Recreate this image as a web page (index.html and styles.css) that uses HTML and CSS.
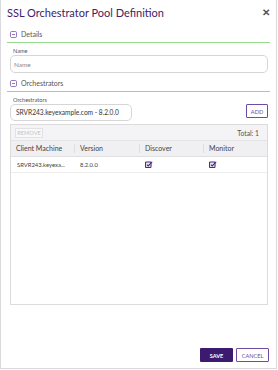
FILE: index.html
```html
<!DOCTYPE html>
<html lang="en">
<head>
    <meta charset="UTF-8">
    <title>SSL Orchestrator Pool Definition</title>
    <link rel="stylesheet" href="styles.css">
</head>
<body>

<div class="dialog">
    <div class="dialog-title">
        <h1>SSL Orchestrator Pool Definition</h1>
        <span class="close">&#x2715;</span>
    </div>

    <!-- Details -->
    <div class="section">
        <div class="section-head">
            <svg class="toggle" viewBox="0 0 7 7"><rect x="0.5" y="0.5" width="6" height="6" rx="1.2"/><line x1="2" y1="3.5" x2="5" y2="3.5"/></svg>
            <span>Details</span>
        </div>
        <div class="field">
            <label>Name</label>
            <input class="text-input" type="text" placeholder="Name">
        </div>
    </div>

    <!-- Orchestrators -->
    <div class="section">
        <div class="section-head">
            <svg class="toggle" viewBox="0 0 7 7"><rect x="0.5" y="0.5" width="6" height="6" rx="1.2"/><line x1="2" y1="3.5" x2="5" y2="3.5"/></svg>
            <span>Orchestrators</span>
        </div>
        <div class="field">
            <label>Orchestrators</label>
            <div class="select-row">
                <div class="select">SRVR243.keyexample.com - 8.2.0.0</div>
                <button class="btn-outline add">ADD</button>
            </div>
        </div>

        <div class="grid">
            <div class="grid-toolbar">
                <button class="btn-disabled">REMOVE</button>
                <span class="total">Total: 1</span>
            </div>
            <div class="grid-row grid-head">
                <div class="cell">Client Machine</div>
                <div class="cell">Version</div>
                <div class="cell">Discover</div>
                <div class="cell">Monitor</div>
            </div>
            <div class="grid-row grid-data">
                <div class="cell">SRVR243.keyexa...</div>
                <div class="cell">8.2.0.0</div>
                <div class="cell"><svg class="check" viewBox="0 0 8 7"><rect x="0.5" y="1" width="5.5" height="5.5" rx="0.8"/><path d="M2 3.6 L3.2 4.9 L7.2 0.9"/></svg></div>
                <div class="cell"><svg class="check" viewBox="0 0 8 7"><rect x="0.5" y="1" width="5.5" height="5.5" rx="0.8"/><path d="M2 3.6 L3.2 4.9 L7.2 0.9"/></svg></div>
            </div>
        </div>
    </div>

    <div class="dialog-actions">
        <button class="btn-primary">SAVE</button>
        <button class="btn-outline">CANCEL</button>
    </div>
</div>

</body>
</html>
```

FILE: styles.css
```css
body {
    margin: 0;
    padding: 0;
    font-family: 'Lato', 'Liberation Sans', sans-serif;
    background-color: #fff;
    color: #444;
}
.dialog {
    width: 277px;
    height: 369px;
    box-sizing: border-box;
    border: 1px solid #d9d9de;
    border-top: none;
    display: flex;
    flex-direction: column;
}
.dialog-title {
    display: flex;
    justify-content: space-between;
    align-items: center;
    height: 24px;
    padding: 0 6px 0 6px;
}
.dialog-title h1 {
    margin: 0;
    font-size: 11px;
    font-weight: 400;
    color: #3f2168;
}
.close {
    font-size: 10px;
    font-weight: bold;
    color: #555;
}
.section {
    margin: 0 6px;
}
.section-head {
    display: flex;
    align-items: center;
    gap: 4px;
    height: 16px;
    margin-top: 2px;
    padding-left: 3px;
    border-bottom: 1px solid #95d98a;
    font-size: 7px;
    line-height: 9px;
    color: #555;
}
.toggle {
    width: 7px;
    height: 7px;
    fill: none;
    stroke: #7b55b0;
    stroke-width: 0.8;
}
.field {
    padding: 4px 2px 0 3px;
}
.field label {
    display: block;
    font-size: 5.6px;
    line-height: 7px;
    color: #555;
    margin-bottom: 1px;
    padding-left: 3px;
}
.text-input {
    display: block;
    width: 100%;
    height: 18px;
    margin: 0;
    box-sizing: border-box;
    border: 1px solid #d6d6d6;
    border-radius: 5px;
    padding: 0 3px;
    font-family: inherit;
    font-size: 6.4px;
    color: #444;
}
.text-input::placeholder {
    color: #888;
}
.select-row {
    display: flex;
    justify-content: space-between;
    align-items: flex-start;
}
.select {
    width: 122px;
    height: 17px;
    box-sizing: border-box;
    border: 1px solid #d6d6d6;
    border-radius: 5px;
    padding-left: 5px;
    font-size: 6.6px;
    line-height: 15px;
    white-space: nowrap;
    color: #333;
}
.btn-outline {
    border: 1px solid #6e4ca3;
    background-color: #fff;
    color: #6a4a9a;
    font-family: inherit;
    font-size: 5.6px;
    padding: 0;
    border-radius: 1px;
}
.add {
    width: 22px;
    height: 14px;
}
.grid {
    margin: 3px 2px 0 3px;
    height: 181px;
    box-sizing: border-box;
    border: 1px solid #dcdcdc;
}
.grid-toolbar {
    display: flex;
    justify-content: space-between;
    align-items: center;
    height: 15px;
    padding: 0 8px 0 4px;
    background-color: #f4f4f6;
}
.btn-disabled {
    width: 28px;
    height: 10px;
    padding: 0;
    border: 1px solid #e2e2e2;
    background-color: #f8f8f8;
    color: #c4c4c4;
    font-family: inherit;
    font-size: 5.6px;
}
.total {
    font-size: 6.8px;
    color: #555;
}
.grid-row {
    display: grid;
    grid-template-columns: 63px 65px 64px 1fr;
    height: 15px;
    align-items: center;
}
.grid-head {
    background-color: #f0f0f2;
    border-top: 1px solid #e4e4e4;
    border-bottom: 1px solid #e0e0e0;
    font-size: 7px;
    color: #444;
}
.grid-head .cell + .cell {
    border-left: 1px solid #dedede;
}
.cell {
    padding-left: 5px;
    line-height: 9px;
}
.grid-data {
    font-size: 5.9px;
    color: #444;
    border-bottom: 1px solid #eee;
}
.grid-data .cell {
    padding-left: 6px;
}
.check {
    width: 8px;
    height: 7px;
    display: block;
    fill: #ece6f5;
    stroke: #4a2a82;
    stroke-width: 1.1;
}
.check path {
    fill: none;
}
.dialog-actions {
    margin-top: auto;
    display: flex;
    justify-content: flex-end;
    gap: 3px;
    padding: 0 7px 6px 0;
}
.dialog-actions button {
    width: 33px;
    height: 14px;
}
.btn-primary {
    border: none;
    background-color: #3c1a70;
    color: #fff;
    font-family: inherit;
    font-size: 5.6px;
    font-weight: bold;
    padding: 0;
    border-radius: 1px;
}
```
